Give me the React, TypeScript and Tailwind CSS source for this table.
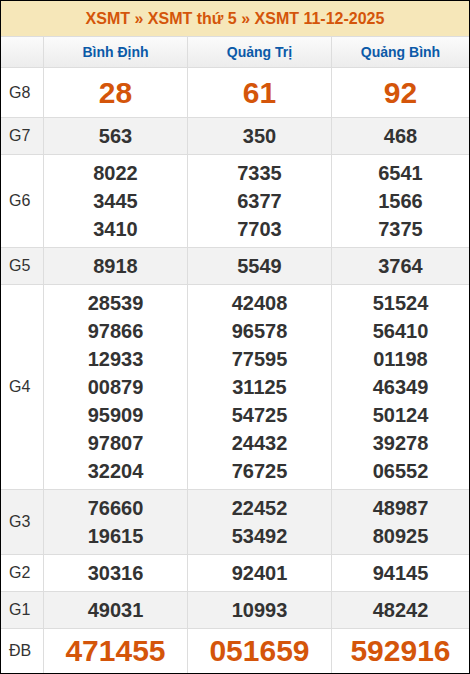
const provinces = ["Bình Định", "Quảng Trị", "Quảng Bình"];

type Row = {
	label: string;
	values: string[][];
	big?: boolean;
	gray?: boolean;
	h: string;
};

const rows: Row[] = [
	{ label: "G8", values: [["28"], ["61"], ["92"]], big: true, h: "h-[50px]" },
	{ label: "G7", values: [["563"], ["350"], ["468"]], gray: true, h: "h-[37px]" },
	{
		label: "G6",
		values: [
			["8022", "3445", "3410"],
			["7335", "6377", "7703"],
			["6541", "1566", "7375"],
		],
		h: "h-[93px]",
	},
	{ label: "G5", values: [["8918"], ["5549"], ["3764"]], gray: true, h: "h-[37px]" },
	{
		label: "G4",
		values: [
			["28539", "97866", "12933", "00879", "95909", "97807", "32204"],
			["42408", "96578", "77595", "31125", "54725", "24432", "76725"],
			["51524", "56410", "01198", "46349", "50124", "39278", "06552"],
		],
		h: "h-[205px]",
	},
	{
		label: "G3",
		values: [
			["76660", "19615"],
			["22452", "53492"],
			["48987", "80925"],
		],
		gray: true,
		h: "h-[65px]",
	},
	{ label: "G2", values: [["30316"], ["92401"], ["94145"]], h: "h-[37px]" },
	{ label: "G1", values: [["49031"], ["10993"], ["48242"]], gray: true, h: "h-[37px]" },
	{ label: "ĐB", values: [["471455"], ["051659"], ["592916"]], big: true, h: "h-[44px]" },
];

const colW = ["w-[144px]", "w-[144px]", "w-[137px]"];

const App = () => {
	return (
		<div className="w-[470px] h-[674px] border border-black bg-white font-['Liberation_Sans',Arial,sans-serif]">
			<div className="h-[36px] bg-[#f6e7b9] border-b border-[#dddddd] flex items-center justify-center text-[16px] font-bold text-[#d4550a]">
				XSMT » XSMT thứ 5 » XSMT 11-12-2025
			</div>
			<div className="h-[31px] flex border-b border-[#dddddd] bg-gradient-to-b from-[#fbfbfb] to-[#ececec]">
				<div className="w-[43px] border-r border-[#dddddd]" />
				{provinces.map((p, i) => (
					<div
						key={p}
						className={`${colW[i]} ${i < 2 ? "border-r border-[#dddddd]" : ""} flex items-center justify-center text-[14px] font-bold text-[#0b5aa8]`}>
						{p}
					</div>
				))}
			</div>
			{rows.map((row, ri) => (
				<div
					key={row.label}
					className={`${row.h} flex ${ri < rows.length - 1 ? "border-b border-[#dddddd]" : ""} ${row.gray ? "bg-[#f2f2f2]" : "bg-white"}`}>
					<div className="w-[43px] border-r border-[#dddddd] flex items-center pl-[8px] text-[16px] text-[#333333]">{row.label}</div>
					{row.values.map((vals, ci) => (
						<div
							key={ci}
							className={`${colW[ci]} ${ci < 2 ? "border-r border-[#dddddd]" : ""} flex flex-col items-center justify-center font-bold ${
								row.big ? "text-[30px] text-[#d4550a] leading-[34px]" : "text-[20px] text-[#333333] leading-[28px]"
							}`}>
							{vals.map((v) => (
								<span key={v}>{v}</span>
							))}
						</div>
					))}
				</div>
			))}
		</div>
	);
};

export default App;
